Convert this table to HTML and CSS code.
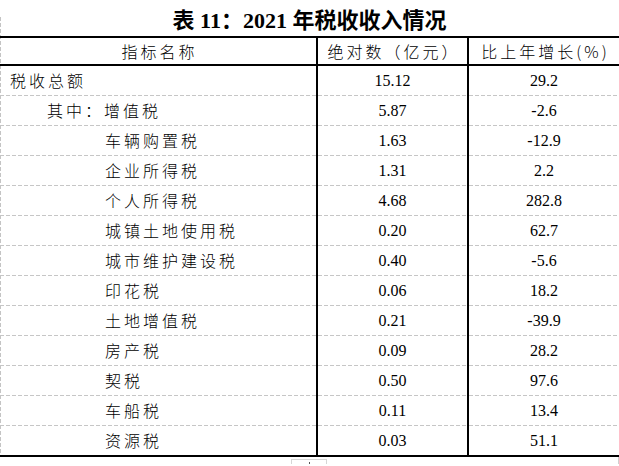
FILE: index.html
```html
<!DOCTYPE html>
<html lang="zh-CN">
<head>
<meta charset="utf-8">
<title>表 11：2021 年税收收入情况</title>
<link rel="stylesheet" href="styles.css">
</head>
<body>
<div class="sheet">
  <div class="title">表 11：2021 年税收收入情况</div>
  <div class="grid">
    <div class="cell hd c1 center">指标名称</div>
    <div class="cell hd c2">绝对数（亿元）</div>
    <div class="cell hd c3">比上年增长(%)</div>

    <div class="cell name lv0">税收总额</div>
    <div class="cell num c2">15.12</div>
    <div class="cell num c3">29.2</div>

    <div class="cell name lv1">其中：增值税</div>
    <div class="cell num c2">5.87</div>
    <div class="cell num c3">-2.6</div>

    <div class="cell name lv2">车辆购置税</div>
    <div class="cell num c2">1.63</div>
    <div class="cell num c3">-12.9</div>

    <div class="cell name lv2">企业所得税</div>
    <div class="cell num c2">1.31</div>
    <div class="cell num c3">2.2</div>

    <div class="cell name lv2">个人所得税</div>
    <div class="cell num c2">4.68</div>
    <div class="cell num c3">282.8</div>

    <div class="cell name lv2">城镇土地使用税</div>
    <div class="cell num c2">0.20</div>
    <div class="cell num c3">62.7</div>

    <div class="cell name lv2">城市维护建设税</div>
    <div class="cell num c2">0.40</div>
    <div class="cell num c3">-5.6</div>

    <div class="cell name lv2">印花税</div>
    <div class="cell num c2">0.06</div>
    <div class="cell num c3">18.2</div>

    <div class="cell name lv2">土地增值税</div>
    <div class="cell num c2">0.21</div>
    <div class="cell num c3">-39.9</div>

    <div class="cell name lv2">房产税</div>
    <div class="cell num c2">0.09</div>
    <div class="cell num c3">28.2</div>

    <div class="cell name lv2">契税</div>
    <div class="cell num c2">0.50</div>
    <div class="cell num c3">97.6</div>

    <div class="cell name lv2">车船税</div>
    <div class="cell num c2">0.11</div>
    <div class="cell num c3">13.4</div>

    <div class="cell name lv2 last">资源税</div>
    <div class="cell num c2 last">0.03</div>
    <div class="cell num c3 last">51.1</div>
  </div>
</div>
<div class="foot"><div class="tab"><span class="tick"></span></div></div>
</body>
</html>
```
FILE: styles.css
```css
html, body {
  margin: 0;
  padding: 0;
  background: #ffffff;
}

.sheet {
  width: 619px;
  background: repeating-linear-gradient(to bottom, #c4c4c4 0 4px, transparent 4px 6px) left 0 top 17px / 1px calc(100% - 19px) no-repeat;
}

.title {
  height: 36px;
  display: flex;
  align-items: center;
  justify-content: center;
  font: bold 22px "Liberation Serif", "Noto Sans CJK SC", serif;
  color: #000;
}

.grid {
  display: grid;
  grid-template-columns: 316px 151px 152px;
  border-top: 2px solid #000;
  border-bottom: 2px solid #000;
}

.cell {
  height: 30px;
  display: flex;
  align-items: center;
  box-sizing: border-box;
  color: #000;
  background: repeating-linear-gradient(to right, #c6c6c6 0 4px, transparent 4px 6px) left bottom / 100% 1px no-repeat;
}

.cell.last {
  height: 29px;
  background: none;
}

.hd {
  height: 28px;
  background: none;
  border-bottom: 2px solid #000;
  font: 300 16px "Noto Sans CJK SC", sans-serif;
  letter-spacing: 3px;
  justify-content: center;
  padding-left: 3px;
}

.c2, .c3 {
  border-left: 2px solid #000;
  justify-content: center;
}

.name {
  font: 300 16px "Noto Sans CJK SC", sans-serif;
  letter-spacing: 3px;
  padding-bottom: 2px;
}

.lv0 { padding-left: 10px; }
.lv1 { padding-left: 47px; }
.lv2 { padding-left: 105px; }

.num {
  font: 16px "Liberation Serif", serif;
}

.foot {
  width: 618px;
  height: 7px;
  border-right: 1px solid #d0d0d0;
  display: flex;
  justify-content: center;
  align-items: flex-end;
}

.tab {
  width: 34px;
  height: 4px;
  border: 1px solid #d6d6d6;
  border-bottom: 0;
  display: flex;
  justify-content: center;
  align-items: flex-end;
}

.tick {
  width: 1px;
  height: 2px;
  background: #555;
}
```
